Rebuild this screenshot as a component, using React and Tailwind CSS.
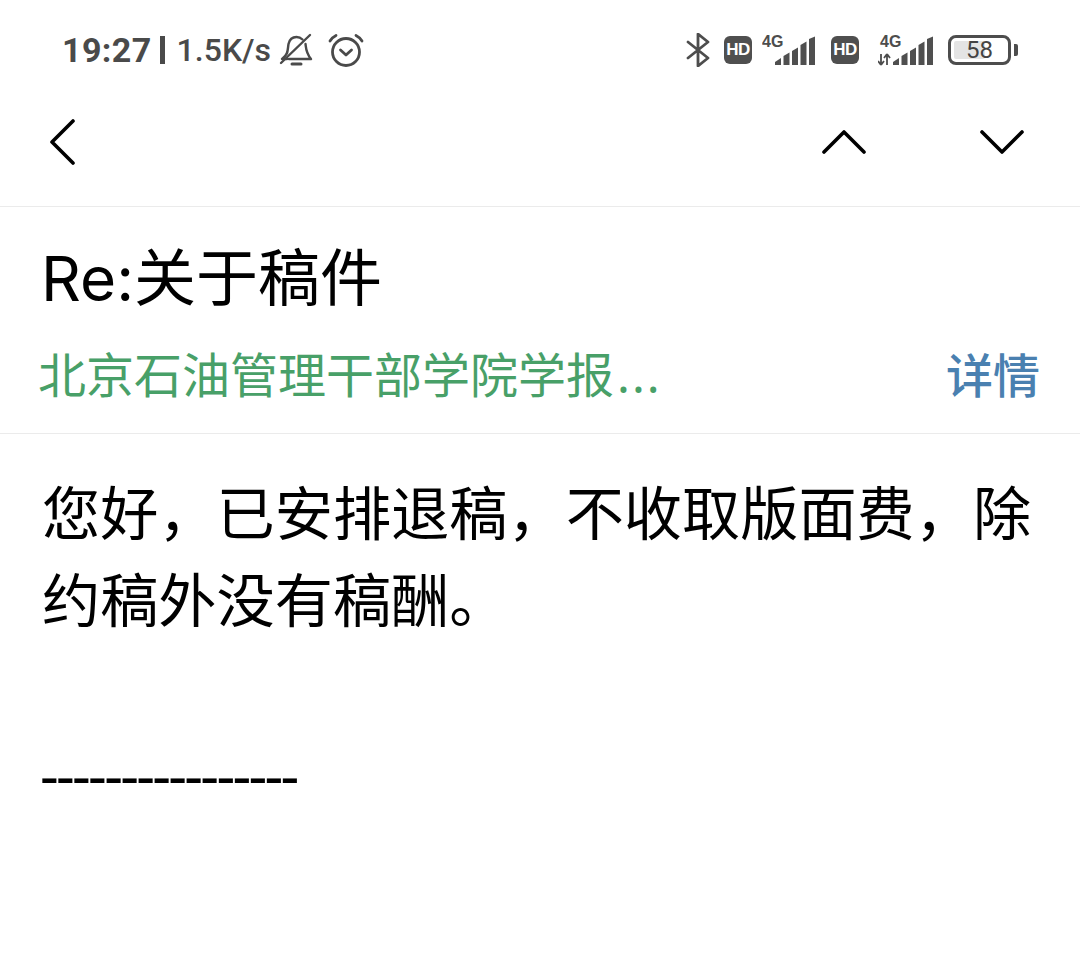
import React from "react";

const cjk = "font-['Noto_Sans','Noto_Sans_CJK_SC',sans-serif]";

function BellOff() {
  return (
    <svg width="34" height="36" viewBox="0 0 34 36" fill="none" stroke="#4a4a4a" strokeWidth="2.400" strokeLinecap="round" strokeLinejoin="round">
      <path d="M8 21c1-3 1-6 1.500-9 1-4.500 4-7 8-7 2.500 0 4.500 1 6 2.500" />
      <path d="M26.500 12c.5 4 .5 9 5.500 15H10" />
      <path d="M8 21c-1 2.500-3 4.500-5 6h5" />
      <path d="M2 31 31 3" />
      <path d="M13 32h9" strokeWidth="3" />
    </svg>
  );
}

function Alarm() {
  return (
    <svg width="36" height="36" viewBox="0 0 36 36" fill="none" stroke="#4a4a4a" strokeWidth="2.800" strokeLinecap="round" strokeLinejoin="round">
      <circle cx="18" cy="20" r="13.500" />
      <path d="M12.500 18l5.500 5 5.500-5" />
      <path d="M2 9c1.500-2.500 3-4 6-5.500" />
      <path d="M34 9c-1.500-2.500-3-4-6-5.500" />
    </svg>
  );
}

function Bluetooth() {
  return (
    <svg width="24" height="34" viewBox="0 0 24 34" fill="none" stroke="#4d4d4d" strokeWidth="2.800" strokeLinecap="round" strokeLinejoin="round">
      <path d="M2 9l20 16-10 8V1l10 8L2 25" />
    </svg>
  );
}

function HdBadge() {
  return (
    <span className="flex h-[28px] w-[28px] items-center justify-center rounded-[6px] bg-[#4f4f4f] font-['Liberation_Sans',sans-serif] text-[17px] font-bold tracking-[-0.5px] text-white">
      HD
    </span>
  );
}

function Signal({ arrows }) {
  const dx = arrows ? 2 : 0;
  return (
    <svg width={arrows ? 55 : 53} height="32" viewBox={arrows ? "0 0 55 32" : "0 0 53 32"} className="block">
      <text x={arrows ? 2 : 0} y="12.500" fontFamily="'Liberation Sans',sans-serif" fontSize="16" fontWeight="700" fill="#4d4d4d">4G</text>
      {arrows && (
        <path d="M3 20v11M3 31l-3-4M3 31l3-4M9 31V20M9 20l-3 4M9 20l3 4" stroke="#4d4d4d" strokeWidth="1.800" fill="none" />
      )}
      <g transform={`translate(${dx} 0)`} fill="#4f4f4f">
        <path d="M13 31v-3l6-4v7z" />
        <path d="M21.500 31V22l6-3.500V31z" />
        <path d="M30 31V17l6-3.500V31z" />
        <path d="M38.500 31V11l6-3.500V31z" />
        <path d="M47 31V5l6-2.500V31z" />
      </g>
    </svg>
  );
}

function Battery() {
  return (
    <span className="flex items-center gap-[3px]">
      <span className="relative flex h-[30px] w-[63px] items-center justify-center rounded-[8px] border-[3px] border-[#4d4d4d] p-[3px]">
        <span className="absolute left-[3px] top-[3px] h-[18px] w-[31px] rounded-[2px] bg-[#e4e4e4]" />
        <span className="relative font-['Roboto',sans-serif] text-[24px] leading-none text-[#444]">58</span>
      </span>
      <span className="h-[12px] w-[4px] rounded-r-[2px] bg-[#4d4d4d]" />
    </span>
  );
}

function Chevron({ d, w, h }) {
  return (
    <svg width={w} height={h} viewBox={`0 0 ${w} ${h}`} fill="none" stroke="#000" strokeWidth="3.600" strokeLinecap="round" strokeLinejoin="round">
      <path d={d} />
    </svg>
  );
}

export default function App() {
  return (
    <div className={`flex h-[958px] w-[1080px] flex-col overflow-hidden bg-white ${cjk}`}>
      {/* status bar */}
      <div className="flex h-[100px] items-center justify-between pl-[62px] pr-[62px]">
        <div className="flex items-center text-[#4a4a4a]">
          <span className="font-['Roboto',sans-serif] text-[34px] font-bold tracking-[0.4px]">19:27</span>
          <span className="ml-[8px] h-[28px] w-[5px] bg-[#4a4a4a]" />
          <span className="ml-[12px] font-['Roboto',sans-serif] text-[32px] font-medium">1.5K/s</span>
          <span className="ml-[8px] flex"><BellOff /></span>
          <span className="ml-[15px] flex"><Alarm /></span>
        </div>
        <div className="flex items-center">
          <Bluetooth />
          <span className="ml-[14px]"><HdBadge /></span>
          <span className="ml-[10px]"><Signal /></span>
          <span className="ml-[16px]"><HdBadge /></span>
          <span className="ml-[19px]"><Signal arrows /></span>
          <span className="ml-[15px]"><Battery /></span>
        </div>
      </div>

      {/* nav */}
      <div className="flex h-[107px] items-start border-b border-[#ebebeb] pl-[49px] pr-[56px] pt-[19px]">
        <Chevron w={26} h={46} d="M24 2 3 23l21 21" />
        <div className="ml-auto mt-[10px] flex gap-[114px]">
          <Chevron w={44} h={26} d="M2 23 22 3l20 20" />
          <Chevron w={44} h={26} d="M2 3l20 20L42 3" />
        </div>
      </div>

      {/* subject */}
      <div className="border-b border-[#ebebeb] pl-[40px] pr-[40px]">
        <div className="ml-[1px] mt-[29px] font-['Inter','Noto_Sans_CJK_SC',sans-serif] text-[62px] leading-[85px] text-black">Re:关于稿件</div>
        <div className="mt-[19px] flex h-[93px] items-start justify-between">
          <span className="-ml-[2px] text-[48px] leading-[70px] text-[#48a068]">
            北京石油管理干部学院学报<span className="ml-[3px] tracking-[2px]">...</span>
          </span>
          <span className="text-[47px] font-medium leading-[70px] text-[#4a80b0]">详情</span>
        </div>
      </div>

      {/* body */}
      <div className="pl-[42px] pt-[35px] text-[58.200px] leading-[87px] text-black">
        <div>您好，已安排退稿，不收取版面费，除</div>
        <div>约稿外没有稿酬。</div>
        <div>&nbsp;</div>
        <div className="-ml-[2px] tracking-[-2.700px]">----------------</div>
      </div>
    </div>
  );
}
